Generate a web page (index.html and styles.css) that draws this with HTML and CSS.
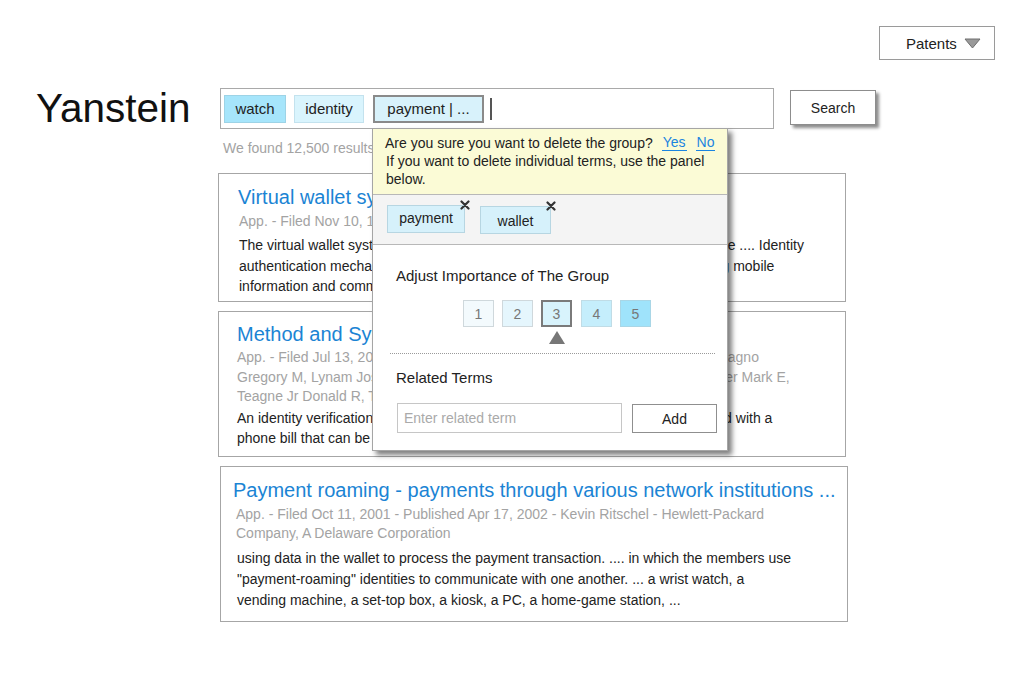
FILE: index.html
```html
<!DOCTYPE html>
<html lang="en">
<head>
<meta charset="utf-8">
<title>Yanstein</title>
<link rel="stylesheet" href="styles.css">
</head>
<body>
<div class="topbar">
  <button class="dropdown">Patents
    <svg class="dd-arrow" width="17" height="11" viewBox="0 0 17 11"><polygon points="1,1 16,1 8.5,10" fill="#9a9a9a" stroke="#6e6e6e" stroke-width="1"/></svg>
  </button>
</div>
<div class="main">
  <div class="brand">Yanstein</div>
  <div class="content">
    <div class="search-row">
      <div class="searchbox">
        <span class="chip chip-strong">watch</span>
        <span class="chip chip-light">identity</span>
        <span class="chip chip-active">payment | ...</span>
        <span class="cursor"></span>
      </div>
      <button class="search-btn">Search</button>

      <div class="popup">
        <div class="popup-head">
          <div class="confirm-row">
            <span>Are you sure you want to delete the group?</span>
            <a class="link">Yes</a>
            <a class="link">No</a>
          </div>
          <p class="hint">If you want to delete individual terms, use the panel below.</p>
        </div>
        <div class="popup-tags">
          <span class="tag tag-payment">payment<svg class="tag-x" width="10" height="10" viewBox="0 0 10 10"><path d="M1.5 1.5 L8.5 8.5 M8.5 1.5 L1.5 8.5" stroke="#333" stroke-width="2.2" stroke-linecap="round"/></svg></span>
          <span class="tag tag-wallet">wallet<svg class="tag-x" width="10" height="10" viewBox="0 0 10 10"><path d="M1.5 1.5 L8.5 8.5 M8.5 1.5 L1.5 8.5" stroke="#333" stroke-width="2.2" stroke-linecap="round"/></svg></span>
        </div>
        <div class="popup-body">
          <div class="section-title">Adjust Importance of The Group</div>
          <div class="levels">
            <span class="level l1">1</span>
            <span class="level l2">2</span>
            <span class="level l3 current">3</span>
            <span class="level l4">4</span>
            <span class="level l5">5</span>
          </div>
          <div class="divider"></div>
          <div class="section-title related">Related Terms</div>
          <div class="add-row">
            <input class="term-input" type="text" placeholder="Enter related term">
            <button class="add-btn">Add</button>
          </div>
        </div>
      </div>
    </div>

    <div class="found">We found 12,500 results for your search</div>

    <div class="card card1">
      <div class="title">Virtual wallet system and method for secure payments</div>
      <div class="meta">App. - Filed Nov 10, 1999 - Published Jun 3, 2003 - Citibank</div>
      <div class="body">The virtual wallet system stores payment data and user data in a secure storage .... Identity<br>authentication mechanism for the wallet user across payment devices including mobile<br>information and communication devices ...</div>
    </div>

    <div class="card card2">
      <div class="title">Method and System for identity verification</div>
      <div class="meta">App. - Filed Jul 13, 2005 - Published Jan 18, 2007 - Kranzley Arthur D, Scott Teagno<br>Gregory M, Lynam Joshua W, Ko, Mastercard International Incorporated, Mueller Mark E,<br>Teagne Jr Donald R, Thomas Keith P</div>
      <div class="body">An identity verification system for a consumer and a merchant that is associated with a<br>phone bill that can be used as a verification document ...</div>
    </div>

    <div class="card card3">
      <div class="title">Payment roaming - payments through various network institutions ...</div>
      <div class="meta">App. - Filed Oct 11, 2001 - Published Apr 17, 2002 - Kevin Ritschel - Hewlett-Packard<br>Company, A Delaware Corporation</div>
      <div class="body">using data in the wallet to process the payment transaction. .... in which the members use<br>"payment-roaming" identities to communicate with one another. ... a wrist watch, a<br>vending machine, a set-top box, a kiosk, a PC, a home-game station, ...</div>
    </div>
  </div>
</div>
</body>
</html>
```
FILE: styles.css
```css
* { box-sizing: border-box; }
html, body { margin: 0; padding: 0; background: #fff; }
body {
  width: 1024px;
  height: 700px;
  overflow: hidden;
  font-family: "Liberation Sans", Arial, sans-serif;
  color: #222;
}
button, input { font-family: inherit; }

.topbar {
  display: flex;
  justify-content: flex-end;
  padding: 26px 29px 0 0;
}
.dropdown {
  width: 116px;
  height: 34px;
  border: 1px solid #9a9a9a;
  background: #fff;
  font-size: 15px;
  color: #222;
  display: flex;
  align-items: center;
  padding: 0 0 0 26px;
  gap: 7px;
}
.dd-arrow { margin-top: 1px; }

.main {
  display: grid;
  grid-template-columns: 218px 1fr;
  margin-top: 28px;
}
.brand {
  padding-left: 36px;
  font-size: 40.5px;
  line-height: 40px;
  height: 40px;
  color: #111;
}

.search-row {
  position: relative;
  display: flex;
  align-items: flex-start;
  margin-left: 2px;
}
.searchbox {
  width: 554px;
  height: 41px;
  border: 1px solid #a9a9a9;
  display: flex;
  align-items: center;
  padding: 0 0 0 3px;
  gap: 8px;
}
.chip {
  height: 28px;
  display: inline-flex;
  align-items: center;
  justify-content: center;
  font-size: 15px;
  color: #222;
  border: 1px solid #b9dbe8;
}
.chip-strong { width: 62px; background: #a6e5fb; border-color: #9dd3e6; }
.chip-light { width: 70px; background: #d9f4fd; border-color: #c3e2ee; }
.chip-active { width: 111px; background: #d8f2fb; border: 2px solid #8a8a8a; margin-left: 1px; }
.cursor {
  width: 2px;
  height: 22px;
  background: #555;
  margin-left: -2px;
}
.search-btn {
  margin: 2px 0 0 16px;
  width: 86px;
  height: 35px;
  background: #fff;
  border: 1px solid #8d8d8d;
  font-size: 14px;
  color: #222;
  box-shadow: 3px 3px 3px rgba(0,0,0,0.45);
}

.found {
  margin: 9px 0 0 5px;
  font-size: 14px;
  line-height: 20px;
  color: #a3a3a3;
}

.card {
  border: 1px solid #a6a6a6;
  width: 628px;
  margin-top: 15px;
}
.card + .card { margin-top: 9px; }
.title {
  font-size: 20px;
  line-height: 24px;
  color: #1b84d4;
  white-space: nowrap;
}
.meta {
  font-size: 14px;
  color: #a3a3a3;
  white-space: nowrap;
}
.body {
  font-size: 14px;
  color: #222;
  white-space: nowrap;
}
.card1 { height: 129px; padding: 11px 0 0 19px; }
.card1 .meta { line-height: 20px; margin-top: 2px; margin-left: 1px; }
.card1 .body { line-height: 20.5px; margin-top: 4px; margin-left: 1px; }

.card2 { height: 146px; padding: 10px 0 0 18px; }
.card2 .meta { line-height: 19.5px; margin-top: 2px; }
.card2 .body { line-height: 20px; margin-top: 1px; }

.card3 { height: 156px; margin-left: 2px; padding: 11px 0 0 12px; }
.card3 .meta { line-height: 19px; margin-top: 3px; margin-left: 3px; }
.card3 .body { line-height: 21px; margin-top: 5px; margin-left: 4px; }

/* Popup overlay */
.popup {
  position: absolute;
  left: 152px;
  top: 40px;
  width: 356px;
  height: 323px;
  background: #fff;
  border: 1px solid #a5a5a5;
  box-shadow: 4px 4px 5px rgba(0,0,0,0.5);
  z-index: 5;
  display: flex;
  flex-direction: column;
}
.popup-head {
  background: #fbfbd6;
  padding: 4px 8px 6px 12px;
  height: 65px;
  flex: none;
  font-size: 14px;
  color: #222;
}
.confirm-row {
  display: flex;
  align-items: center;
  height: 19px;
  white-space: nowrap;
}
.link {
  color: #1b84e0;
  border-bottom: 1px solid #1b84e0;
  line-height: 15px;
  padding: 0 1px;
  margin-left: 9px;
}
.link + .link { margin-left: 9px; }
.hint {
  margin: 0 0 0 1px;
  line-height: 18px;
}
.popup-tags {
  height: 51px;
  flex: none;
  background: #f4f4f4;
  border-top: 1px solid #b8b8b8;
  border-bottom: 1px solid #b8b8b8;
  display: flex;
  align-items: flex-start;
  padding: 10px 0 0 14px;
  gap: 15px;
}
.tag {
  position: relative;
  height: 28px;
  display: inline-flex;
  align-items: center;
  justify-content: center;
  background: #d6f1fb;
  border: 1px solid #b7d6e2;
  font-size: 14px;
  color: #222;
}
.tag-payment { width: 78px; padding-bottom: 2px; }
.tag-wallet { width: 71px; margin-top: 1px; padding-top: 2px; }
.tag-x {
  position: absolute;
  right: -6px;
  top: -6px;
}
.popup-body {
  flex: 1;
  padding: 0;
}
.section-title {
  font-size: 15px;
  line-height: 20px;
  color: #222;
  margin: 21px 0 0 23px;
}
.levels {
  display: flex;
  gap: 8px;
  margin: 14px 0 0 90px;
}
.level {
  width: 31px;
  height: 27px;
  display: inline-flex;
  align-items: center;
  justify-content: center;
  font-size: 14px;
  color: #777;
  border: 1px solid #cfd8dc;
}
.l1 { background: #f3fafd; }
.l2 { background: #e5f6fd; }
.l3 { background: #d8f3fc; }
.l4 { background: #c5eefc; border-color: #c0dce6; margin-left: 1px; }
.l5 { background: #9fe3fb; border-color: #a9d6e6; }
.current {
  position: relative;
  border: 2px solid #7a7a7a;
}
.current::after {
  content: "";
  position: absolute;
  left: 50%;
  top: 29px;
  margin-left: -8px;
  border-left: 8px solid transparent;
  border-right: 8px solid transparent;
  border-bottom: 13px solid #777;
}
.divider {
  margin: 26px 12px 0 17px;
  border-top: 1px dotted #9a9a9a;
}
.related { margin-top: 14px; }
.add-row {
  display: flex;
  align-items: flex-start;
  margin: 15px 0 0 24px;
  gap: 10px;
}
.term-input {
  width: 225px;
  height: 30px;
  border: 1px solid #c6c6c6;
  padding: 0 6px;
  font-size: 14px;
  color: #222;
  outline: none;
}
.term-input::placeholder { color: #aaa; }
.add-btn {
  margin-top: 1px;
  width: 85px;
  height: 29px;
  background: #fff;
  border: 1px solid #8f8f8f;
  font-size: 14px;
  color: #222;
}
```
